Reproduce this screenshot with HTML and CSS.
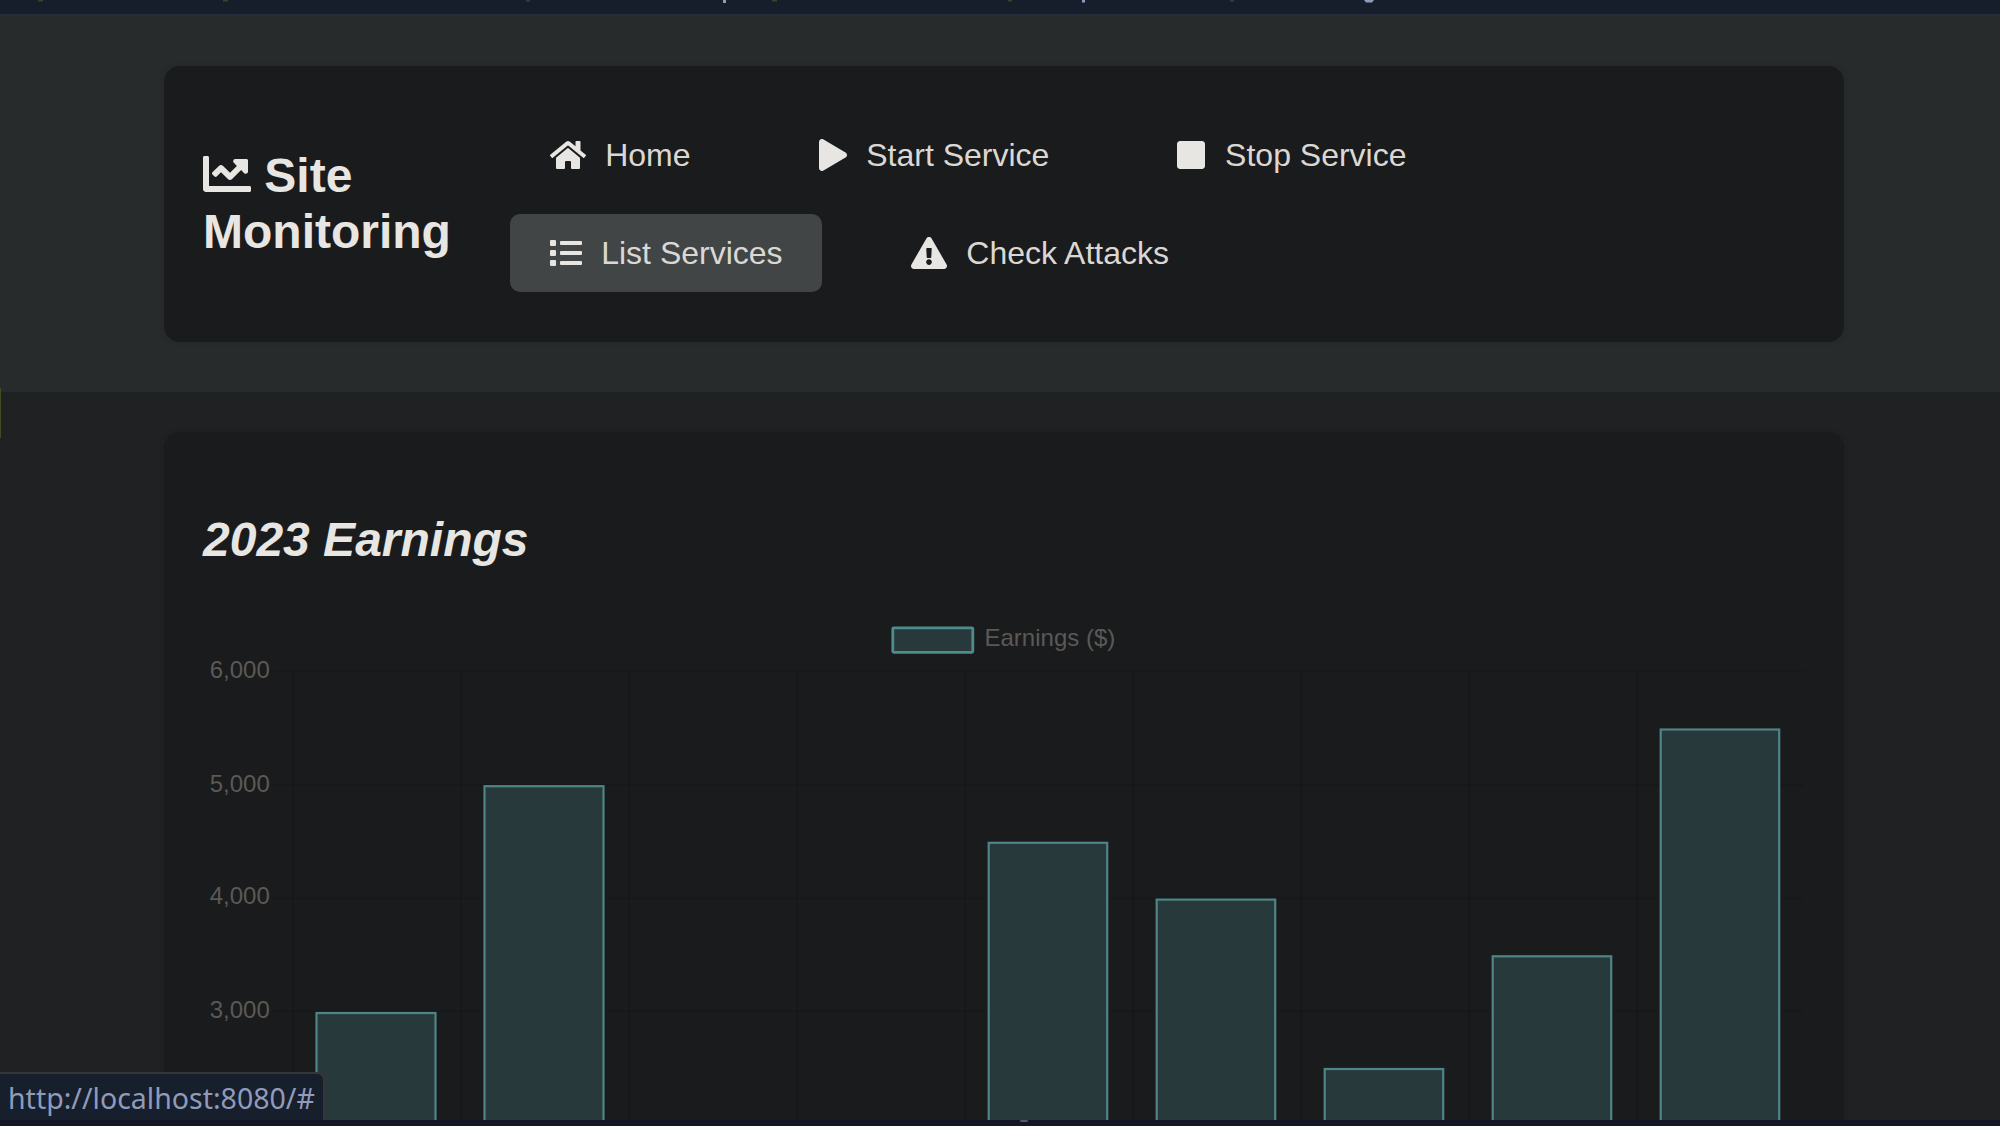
FILE: index.html
```html
<!DOCTYPE html>
<html lang="en">
<head>
<meta charset="utf-8">
<title>Site Monitoring</title>
<link rel="stylesheet" href="styles.css">
</head>
<body>
<div class="window-top">
  <svg class="traces" width="2000" height="5" viewBox="0 0 2000 5">
    <g fill="#35452b"><rect x="38" width="5" height="1.5"/><rect x="223" width="5" height="1.5"/><rect x="526" width="4" height="1.5"/><rect x="772" width="5" height="1.5"/><rect x="1008" width="4" height="1.5"/><rect x="1230" width="4" height="1.5"/></g>
    <g fill="#8d9cbd"><rect x="723" width="3" height="3"/><rect x="1082" width="3" height="2.5"/><path d="M1364 0h10l-2 2.5h-6z"/></g>
  </svg>
</div>
<header class="header">
  <div class="card nav-card">
    <h1 class="brand"><svg class="brand-icon" viewBox="0 0 512 512"><path d="M496 384H64V80c0-8.84-7.16-16-16-16H16C7.16 64 0 71.16 0 80v336c0 17.67 14.33 32 32 32h464c8.84 0 16-7.16 16-16v-32c0-8.84-7.16-16-16-16zM464 96H345.94c-21.38 0-32.09 25.85-16.97 40.97l32.4 32.4L288 242.75l-73.37-73.37c-12.5-12.5-32.76-12.5-45.25 0l-68.69 68.69c-6.25 6.25-6.25 16.38 0 22.63l22.62 22.62c6.25 6.25 16.38 6.25 22.63 0L192 237.25l73.37 73.37c12.5 12.5 32.76 12.5 45.25 0l96-96 32.4 32.4c15.12 15.12 40.97 4.41 40.97-16.97V112c.01-8.84-7.15-16-15.99-16z"/></svg> Site Monitoring</h1>
    <nav class="nav">
      <a class="nav-link"><svg class="i-wide" viewBox="0 0 576 512"><path d="M280.37 148.26L96 300.11V464a16 16 0 0 0 16 16l112.06-.29a16 16 0 0 0 15.92-16V368a16 16 0 0 1 16-16h64a16 16 0 0 1 16 16v95.64a16 16 0 0 0 16 16.05L464 480a16 16 0 0 0 16-16V300L295.67 148.26a12.19 12.19 0 0 0-15.3 0zM571.6 251.47L488 182.56V44.05a12 12 0 0 0-12-12h-56a12 12 0 0 0-12 12v72.61L318.47 43a48 48 0 0 0-61 0L4.34 251.47a12 12 0 0 0-1.6 16.9l25.5 31A12 12 0 0 0 45.15 301l235.22-193.74a12.19 12.19 0 0 1 15.3 0L530.9 301a12 12 0 0 0 16.9-1.6l25.5-31a12 12 0 0 0-1.7-16.93z"/></svg><span>Home</span></a>
      <a class="nav-link"><svg class="i-narrow" viewBox="0 0 448 512"><path d="M424.4 214.7L72.4 6.6C43.8-10.3 0 6.1 0 47.9V464c0 37.5 40.7 60.1 72.4 41.3l352-208c31.4-18.5 31.5-64.1 0-82.6z"/></svg><span>Start Service</span></a>
      <a class="nav-link"><svg class="i-narrow" viewBox="0 0 448 512"><path d="M400 32H48C21.5 32 0 53.5 0 80v352c0 26.5 21.5 48 48 48h352c26.5 0 48-21.5 48-48V80c0-26.5-21.5-48-48-48z"/></svg><span>Stop Service</span></a>
      <a class="nav-link active"><svg class="i-square" viewBox="0 0 512 512"><path d="M80 368H16a16 16 0 0 0-16 16v64a16 16 0 0 0 16 16h64a16 16 0 0 0 16-16v-64a16 16 0 0 0-16-16zm0-320H16A16 16 0 0 0 0 64v64a16 16 0 0 0 16 16h64a16 16 0 0 0 16-16V64a16 16 0 0 0-16-16zm0 160H16a16 16 0 0 0-16 16v64a16 16 0 0 0 16 16h64a16 16 0 0 0 16-16v-64a16 16 0 0 0-16-16zm416 176H176a16 16 0 0 0-16 16v32a16 16 0 0 0 16 16h320a16 16 0 0 0 16-16v-32a16 16 0 0 0-16-16zm0-320H176a16 16 0 0 0-16 16v32a16 16 0 0 0 16 16h320a16 16 0 0 0 16-16V80a16 16 0 0 0-16-16zm0 160H176a16 16 0 0 0-16 16v32a16 16 0 0 0 16 16h320a16 16 0 0 0 16-16v-32a16 16 0 0 0-16-16z"/></svg><span>List Services</span></a>
      <a class="nav-link"><svg class="i-wide" viewBox="0 0 576 512"><path d="M569.517 440.013C587.975 472.007 564.806 512 527.94 512H48.054c-36.937 0-59.999-40.055-41.577-71.987L246.423 23.985c18.467-32.009 64.72-31.951 83.154 0l239.94 416.028zM288 354c-25.405 0-46 20.595-46 46s20.595 46 46 46 46-20.595 46-46-20.595-46-46-46zm-43.673-165.346l7.418 136c.347 6.364 5.609 11.346 11.982 11.346h48.546c6.373 0 11.635-4.982 11.982-11.346l7.418-136c.375-6.874-5.098-12.654-11.982-12.654h-63.383c-6.884 0-12.356 5.78-11.981 12.654z"/></svg><span>Check Attacks</span></a>
    </nav>
  </div>
</header>
<main class="main">
  <section class="card chart-card">
    <h2 class="chart-title">2023 Earnings</h2>
    <svg class="chart" width="1604" height="520" viewBox="204 606 1604 520">
      <g class="grid">
        <path d="M274 671.5H1804M274 784.7H1804M274 898.5H1804M274 1011H1804"/>
        <path d="M293 672V1126M461 672V1126M629 672V1126M797 672V1126M965 672V1126M1133.3 672V1126M1301.3 672V1126M1469.3 672V1126M1637.3 672V1126"/>
      </g>
      <g class="bars">
        <rect x="316.5" y="1013" width="119" height="130"/>
        <rect x="484.5" y="786.2" width="119" height="350"/>
        <rect x="988.7" y="842.8" width="118.5" height="300"/>
        <rect x="1156.7" y="899.6" width="118.5" height="300"/>
        <rect x="1324.7" y="1069" width="118.5" height="100"/>
        <rect x="1492.7" y="956.3" width="118.5" height="200"/>
        <rect x="1660.7" y="729.5" width="118.5" height="420"/>
        <rect class="swatch" x="892.8" y="627.8" width="80" height="24.5" rx="1"/>
      </g>
      <g class="labels">
        <text x="984.5" y="646">Earnings ($)</text>
        <g text-anchor="end"><text x="269.8" y="678">6,000</text><text x="269.8" y="791.5">5,000</text><text x="269.8" y="904">4,000</text><text x="269.8" y="1018">3,000</text></g>
      </g>
    </svg>
  </section>
</main>
<div class="status">http://localhost:8080/#</div>
<div class="window-bottom"><i class="speck"></i></div>
<div class="window-left"></div>
</body>
</html>
```
FILE: styles.css
```css
* { box-sizing: border-box; }
body {
  margin: 0;
  height: 1126px;
  overflow: hidden;
  position: relative;
  display: flex;
  flex-direction: column;
  background: #202122;
  color: #e8e6e3;
  font-family: "Liberation Sans", Arial, sans-serif;
}
.window-top {
  flex: none;
  height: 16px;
  background: #171e2b;
  border-bottom: 2px solid #272c3b;
}
.traces { display: block; }
.header {
  flex: none;
  height: 376px;
  padding: 50px 156px 50px 164px;
  background: #272b2b;
}
.card {
  background: #1a1b1c;
  border-radius: 16px;
  box-shadow: 0 0 6px rgba(0, 0, 0, .08);
}
.nav-card {
  height: 276px;
  padding: 0 40px 0 39px;
  display: flex;
  align-items: center;
}
.brand {
  flex: none;
  width: 307px;
  margin: 0;
  font-size: 48px;
  line-height: 56px;
}
.brand-icon {
  display: inline-block;
  width: 48px;
  height: 48px;
  vertical-align: -6px;
  fill: currentColor;
}
.nav {
  flex: 1;
  display: flex;
  flex-wrap: wrap;
  gap: 20px 49px;
  padding-right: 350px;
}
.nav-link {
  display: flex;
  align-items: center;
  gap: 19.7px;
  height: 78px;
  padding: 0 39.5px;
  border-radius: 10px;
  font-size: 32px;
  line-height: 36px;
  white-space: nowrap;
  color: #dbd8d4;
}
.nav-link span { padding-bottom: 1px; }
.nav-link svg { height: 32px; margin-bottom: 1px; fill: #e8e6e3; }
.i-wide { width: 36px; }
.i-square { width: 32px; }
.i-narrow { width: 28px; }
.active { background: #424546; }
.main {
  flex: 1;
  min-height: 0;
  padding: 40px 156px 0 164px;
}
.chart-card {
  height: 694px;
  padding: 80px 36px 0 40px;
  border-radius: 16px 16px 0 0;
}
.chart-title {
  margin: 0 0 0 -1px;
  height: 94px;
  font-size: 48px;
  line-height: 56px;
  font-style: italic;
}
.chart { display: block; }
.grid { stroke: #17181a; stroke-width: 2; fill: none; }
.bars { fill: #28393c; stroke: #4e8585; stroke-width: 2.2; }
.swatch { stroke: #4f8c8c; stroke-width: 2.8; }
.labels { font-size: 24px; fill: #5a5956; }
.status {
  position: absolute;
  left: 0;
  bottom: 6px;
  width: 325px;
  height: 48px;
  padding-left: 8px;
  border: solid #343637;
  border-width: 2px 2px 0 0;
  border-top-right-radius: 8px;
  background: #171e2c;
  color: #8f9bba;
  font: 28.5px/48px "Noto Sans", sans-serif;
}
.window-bottom {
  position: absolute;
  left: 0;
  right: 0;
  bottom: 0;
  height: 6px;
  background: #121724;
}
.speck {
  position: absolute;
  left: 1020px;
  top: 0;
  width: 8px;
  height: 2px;
  border-radius: 1px;
  background: #555865;
}
.window-left {
  position: absolute;
  left: 0;
  top: 388px;
  width: 1px;
  height: 50px;
  background: #3f4d22;
}
```
